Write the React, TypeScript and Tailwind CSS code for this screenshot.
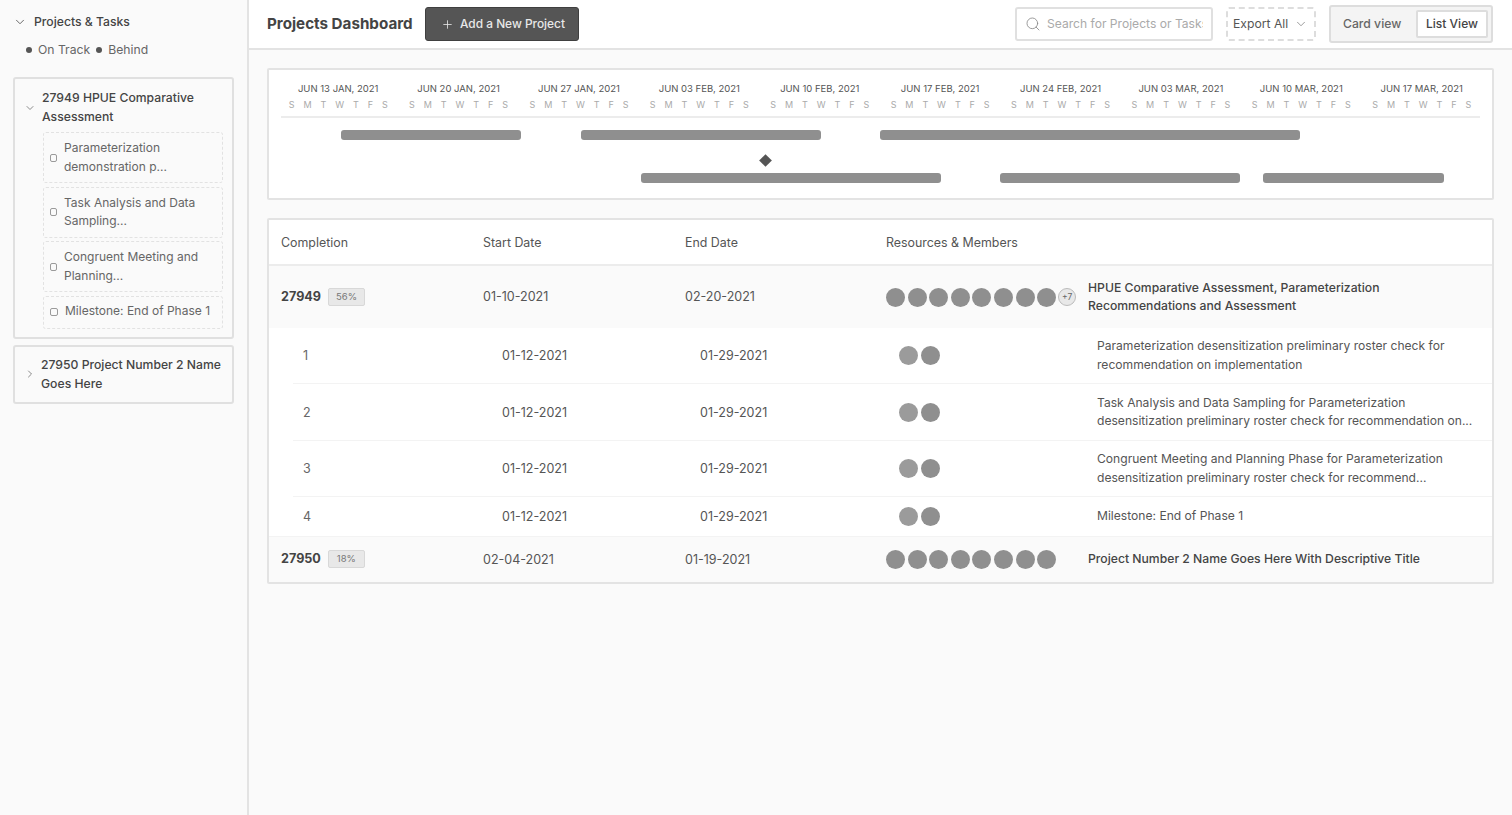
import { ChevronDown, ChevronRight, Plus, Search } from 'lucide-react'

const WEEKS = [
  'JUN 13 JAN, 2021',
  'JUN 20 JAN, 2021',
  'JUN 27 JAN, 2021',
  'JUN 03 FEB, 2021',
  'JUN 10 FEB, 2021',
  'JUN 17 FEB, 2021',
  'JUN 24 FEB, 2021',
  'JUN 03 MAR, 2021',
  'JUN 10 MAR, 2021',
  'JUN 17 MAR, 2021',
]

const DAYS = ['S', 'M', 'T', 'W', 'T', 'F', 'S']

const TASKS = [
  { no: '1', rowClass: 'h-[56px]', title: 'Parameterization desensitization preliminary roster check for recommendation on implementation' },
  { no: '2', rowClass: 'h-[57px]', title: 'Task Analysis and Data Sampling for Parameterization desensitization preliminary roster check for recommendation on...' },
  { no: '3', rowClass: 'h-[56px]', title: 'Congruent Meeting and Planning Phase for Parameterization desensitization preliminary roster check for recommend...' },
  { no: '4', rowClass: 'h-[39px]', title: 'Milestone: End of Phase 1' },
]

function Dots({ count, soft }: { count: number; soft?: boolean }) {
  return (
    <div className="flex gap-[2.6px]">
      {Array.from({ length: count }).map((_, i) => (
        <span key={i} className={`size-[19px] rounded-full ${soft && i === 0 ? 'bg-[#9b9b9b]' : 'bg-[#8f8f8f]'}`} />
      ))}
    </div>
  )
}

function SideTask({ label, oneLine }: { label: string; oneLine?: boolean }) {
  return (
    <div className={`flex items-center border border-dashed border-[#e2e2e2] rounded-[3px] pl-[6px] ${oneLine ? 'h-[33px] gap-[7px] pb-[1px]' : 'h-[51px] gap-[7px] pr-4'}`}>
      <span className={`h-[8px] shrink-0 border border-[#9a9a9a] rounded-[2px] ${oneLine ? 'w-[8px]' : 'w-[7px]'}`} />
      <span className="text-[12px] leading-[18.5px] text-[#666]">{label}</span>
    </div>
  )
}

function Sidebar() {
  return (
    <aside className="w-[249px] shrink-0 border-r-2 border-[#e3e3e3] bg-[#fafafa] px-[13px]">
      <div className="flex items-center h-[20px] mt-[12px] gap-[7px] text-[12.2px] font-medium text-[#444]">
        <ChevronDown className="size-[14px] text-[#555]" strokeWidth={1.5} />
        Projects &amp; Tasks
      </div>
      <div className="flex items-center h-[20px] mt-[8px] pl-[13px] text-[12.2px] text-[#666]">
        <span className="size-[6px] rounded-full bg-[#555] mr-[6px]" />
        On Track
        <span className="size-[6px] rounded-full bg-[#555] ml-[6px] mr-[6px]" />
        Behind
      </div>
      <div className="mt-[17px] border-2 border-[#e0e0e0] rounded-[3px] px-[9px] pt-[10px] pb-[8px]">
        <div className="flex items-center">
          <ChevronDown className="size-[12px] shrink-0 text-[#666] mr-[6px]" strokeWidth={1.5} />
          <span className="text-[12.2px] leading-[18.5px] font-medium text-[#444]">27949 HPUE Comparative Assessment</span>
        </div>
        <div className="flex flex-col gap-[3.5px] mt-[6px] ml-[19px]">
          <SideTask label="Parameterization demonstration p..." />
          <SideTask label="Task Analysis and Data Sampling..." />
          <SideTask label="Congruent Meeting and Planning..." />
          <SideTask label="Milestone: End of Phase 1" oneLine />
        </div>
      </div>
      <div className="mt-[6px] h-[59px] flex items-center border-2 border-[#e0e0e0] rounded-[3px] px-[9px]">
        <ChevronRight className="size-[12px] shrink-0 text-[#666] mr-[5px]" strokeWidth={1.5} />
        <span className="text-[12.2px] leading-[19px] font-medium text-[#444]">27950 Project Number 2 Name Goes Here</span>
      </div>
    </aside>
  )
}

function Header() {
  return (
    <header className="h-[50px] shrink-0 flex items-center bg-white border-b-2 border-[#e3e3e3] pl-[18px] pr-[19px]">
      <h1 className="text-[15.2px] font-bold text-[#444] w-[158px]">Projects Dashboard</h1>
      <button className="flex items-center h-[34px] w-[154px] pl-[15px] gap-[6px] bg-[#555] border border-[#3f3f3f] rounded-[3px] text-[11.9px] font-medium text-[#e8e8e8]">
        <Plus className="size-[13px]" strokeWidth={1.5} />
        Add a New Project
      </button>
      <div className="ml-auto flex items-center h-[34px] w-[198px] pl-[8px] pr-[8px] gap-[6px] border-2 border-[#e0e0e0] rounded-[3px]">
        <Search className="size-[16px] shrink-0 text-[#888]" strokeWidth={1.25} />
        <span className="text-[12.1px] whitespace-nowrap text-[#aaa] overflow-hidden">Search for Projects or Tasks</span>
      </div>
      <button className="ml-[13px] flex items-center h-[34px] w-[90px] pl-[5px] gap-[6px] border-2 border-dashed border-[#ddd] rounded-[3px] text-[12.2px] text-[#555]">
        Export All
        <ChevronDown className="size-[14px] text-[#777]" strokeWidth={1.25} />
      </button>
      <div className="ml-[13px] flex items-center h-[38px] w-[164px] border-2 border-[#ddd] rounded-[3px] bg-[#f4f4f4] pl-[12px] pr-[3px]">
        <span className="text-[12.2px] font-medium text-[#666]">Card view</span>
        <span className="ml-auto flex items-center justify-center h-[28px] w-[72px] bg-white border-2 border-[#ddd] rounded-[2px] text-[12px] font-medium text-[#444]">List View</span>
      </div>
    </header>
  )
}

function Gantt() {
  return (
    <section className="h-[132px] bg-white border-2 border-[#e3e3e3] rounded-[2px] overflow-hidden">
      <div className="grid grid-cols-[repeat(10,120.4px)] ml-[9px] pt-[13px]">
        {WEEKS.map(w => (
          <div key={w} className="flex flex-col items-center">
            <span className="text-[9.5px] leading-[12px] text-[#555]">{w}</span>
            <div className="flex justify-between w-[99px] mt-[4px] text-[9px] leading-[12px] text-[#aaa]">
              {DAYS.map((d, i) => <span key={i}>{d}</span>)}
            </div>
          </div>
        ))}
      </div>
      <div className="h-[2px] bg-[#ececec] mx-[12px] mt-[5px]" />
      <div className="flex h-[10px] mt-[12px] ml-[72px]">
        <span className="w-[180px] rounded-[3px] bg-[#8f8f8f]" />
        <span className="w-[240px] ml-[60px] rounded-[3px] bg-[#8f8f8f]" />
        <span className="w-[420px] ml-[59px] rounded-[3px] bg-[#8f8f8f]" />
      </div>
      <div className="h-[9px] w-[9px] mt-[16px] ml-[492px] rotate-45 bg-[#555]" />
      <div className="flex h-[10px] mt-[8px] ml-[372px]">
        <span className="w-[300px] rounded-[3px] bg-[#8f8f8f]" />
        <span className="w-[240px] ml-[59px] rounded-[3px] bg-[#8f8f8f]" />
        <span className="w-[181px] ml-[23px] rounded-[3px] bg-[#8f8f8f]" />
      </div>
    </section>
  )
}

function ProjectRow({ id, pct, start, end, dots, more, title, rowClass }: {
  id: string
  pct: string
  start: string
  end: string
  dots: number
  more?: boolean
  title: string
  rowClass: string
}) {
  return (
    <div className={`grid grid-cols-[202px_202px_201px_202px_1fr] items-center bg-[#fafafa] pl-[12px] pr-4 ${rowClass}`}>
      <div className="flex items-center gap-[7px]">
        <span className="text-[12.6px] font-bold text-[#444]">{id}</span>
        <span className="flex items-center justify-center h-[18px] w-[37px] bg-[#e8e8e8] border border-[#d8d8d8] rounded-[2px] text-[9.5px] text-[#777]">{pct}</span>
      </div>
      <span className="pt-[1px] text-[12.5px] text-[#555]">{start}</span>
      <span className="pt-[1px] text-[12.5px] text-[#555]">{end}</span>
      <div className="flex items-center gap-[2px]">
        <Dots count={dots} />
        {more && (
          <span className="flex items-center justify-center size-[18px] rounded-full bg-[#e8e8e8] border border-[#bbb] text-[8.5px] text-[#666]">+7</span>
        )}
      </div>
      <span className="text-[12.2px] leading-[18.5px] font-medium text-[#444]">{title}</span>
    </div>
  )
}

function TaskRow({ no, title, rowClass, last }: { no: string; title: string; rowClass: string; last?: boolean }) {
  return (
    <div className={`grid grid-cols-[199px_198px_199px_198px_1fr] items-center ml-[24px] pl-[10px] pr-[16px] ${rowClass} ${last ? '' : 'border-b border-[#f3f3f3]'}`}>
      <span className="pt-[2px] text-[12.5px] text-[#666]">{no}</span>
      <span className="pt-[2px] text-[12.5px] text-[#555]">01-12-2021</span>
      <span className="pt-[2px] text-[12.5px] text-[#555]">01-29-2021</span>
      <Dots count={2} soft />
      <span className="text-[12.1px] leading-[18.5px] text-[#555]">{title}</span>
    </div>
  )
}

function ProjectTable() {
  return (
    <section className="mt-[18px] bg-white border-2 border-[#e3e3e3] rounded-[2px] overflow-hidden">
      <div className="grid grid-cols-[202px_202px_201px_202px_1fr] items-center h-[46px] pt-[2px] pl-[12px] border-b-2 border-[#ececec] text-[12.4px] text-[#555]">
        <span>Completion</span>
        <span>Start Date</span>
        <span>End Date</span>
        <span>Resources &amp; Members</span>
      </div>
      <ProjectRow
        id="27949"
        pct="56%"
        start="01-10-2021"
        end="02-20-2021"
        dots={8}
        more
        title="HPUE Comparative Assessment, Parameterization Recommendations and Assessment"
        rowClass="h-[62px]"
      />
      {TASKS.map((t, i) => (
        <TaskRow key={t.no} no={t.no} title={t.title} rowClass={t.rowClass} last={i === TASKS.length - 1} />
      ))}
      <ProjectRow
        id="27950"
        pct="18%"
        start="02-04-2021"
        end="01-19-2021"
        dots={8}
        title="Project Number 2 Name Goes Here With Descriptive Title"
        rowClass="h-[46px] border-t border-[#f3f3f3]"
      />
    </section>
  )
}

export default function App() {
  return (
    <div className="flex h-[815px] overflow-hidden bg-[#fafafa] font-['Inter',sans-serif]">
      <Sidebar />
      <div className="flex-1 flex flex-col min-w-0">
        <Header />
        <main className="pt-[18px] px-[18px]">
          <Gantt />
          <ProjectTable />
        </main>
      </div>
    </div>
  )
}
